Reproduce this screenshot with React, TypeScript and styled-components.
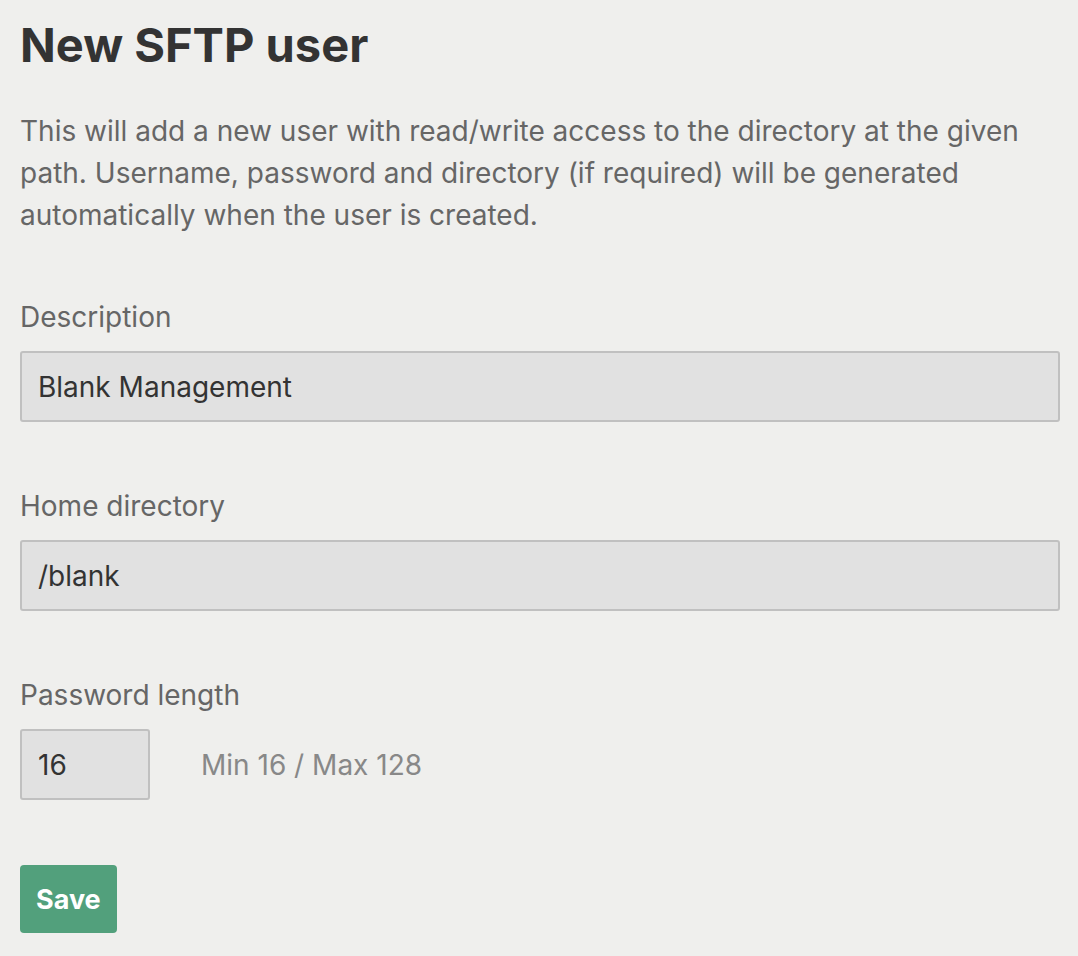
import React from "react";
import styled, { createGlobalStyle } from "styled-components";

const GlobalStyle = createGlobalStyle`
  html, body {
    margin: 0;
    padding: 0;
    background: #efefed;
  }
  body {
    font-family: Inter, "Noto Sans", sans-serif;
    color: #333333;
  }
`;

const Page = styled.main`
  padding: 17px 18px 24px 20px;
  display: flex;
  flex-direction: column;
`;

const Title = styled.h1`
  margin: 0;
  font-size: 47px;
  line-height: 55px;
  font-weight: 700;
  color: #333333;
`;

const Intro = styled.p`
  margin: 38px 0 0;
  font-size: 28px;
  line-height: 42px;
  color: #666666;
`;

const Form = styled.form`
  margin-top: 60px;
  display: flex;
  flex-direction: column;
  gap: 63px;
`;

const Field = styled.div`
  display: flex;
  flex-direction: column;
  gap: 13px;
`;

const Label = styled.label`
  font-size: 28px;
  line-height: 42px;
  color: #666666;
`;

const Row = styled.div`
  display: flex;
  align-items: center;
  gap: 51px;
`;

const Input = styled.input<{ $width?: number }>`
  box-sizing: border-box;
  width: ${(p) => (p.$width ? `${p.$width}px` : "100%")};
  height: 71px;
  padding: 0 16px;
  border: 2px solid #c0c0c0;
  border-radius: 3px;
  background: #e1e1e1;
  font-family: Inter, "Noto Sans", sans-serif;
  font-size: 28px;
  color: #333333;
  outline: none;
`;

const Hint = styled.span`
  font-size: 28px;
  color: #888888;
`;

const SaveButton = styled.button`
  align-self: flex-start;
  margin-top: 2px;
  height: 68px;
  padding: 0 16px;
  border: none;
  border-radius: 4px;
  background: #52a07c;
  color: #ffffff;
  font-family: Inter, "Noto Sans", sans-serif;
  font-size: 27px;
  font-weight: 700;
  cursor: pointer;
`;

export default function App() {
  return (
    <>
      <GlobalStyle />
      <Page>
        <Title>New SFTP user</Title>
        <Intro>
          This will add a new user with read/write access to the directory at the given
          path. Username, password and directory (if required) will be generated
          automatically when the user is created.
        </Intro>
        <Form onSubmit={(e) => e.preventDefault()}>
          <Field>
            <Label htmlFor="description">Description</Label>
            <Input id="description" defaultValue="Blank Management" />
          </Field>
          <Field>
            <Label htmlFor="home">Home directory</Label>
            <Input id="home" defaultValue="/blank" />
          </Field>
          <Field>
            <Label htmlFor="pwlen">Password length</Label>
            <Row>
              <Input id="pwlen" $width={130} defaultValue="16" />
              <Hint>Min 16 / Max 128</Hint>
            </Row>
          </Field>
          <SaveButton type="submit">Save</SaveButton>
        </Form>
      </Page>
    </>
  );
}
